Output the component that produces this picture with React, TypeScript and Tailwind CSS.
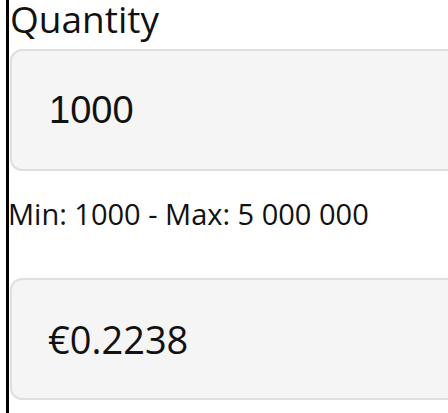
export default function App() {
  const tre = { fontFamily: '"Open Sans", "DejaVu Sans", sans-serif' };
  return (
    <div className="w-[448px] h-[413px] overflow-hidden bg-white pl-[6px]">
      <div className="border-l-[3px] border-black h-full w-[520px] pl-px text-[#111]">
        <div style={tre} className="text-[37px] leading-[35px] h-[38px] pt-px">Quantity</div>
        <div className="mt-[11px] h-[122px] rounded-[12px] border-2 border-[#dcdfe3] bg-[#f5f5f5] flex items-center pl-[37px]">
          <span style={{ fontFamily: '"Liberation Sans", Arial, sans-serif' }} className="text-[38px] leading-none">1000</span>
        </div>
        <div style={tre} className="-ml-[2px] mt-[26px] text-[29px] leading-[34px] h-[34px]">Min: 1000 - Max: 5 000 000</div>
        <div className="mt-[47px] h-[122px] rounded-[12px] border-2 border-[#dcdfe3] bg-[#f5f5f5] flex items-center pl-[36px]">
          <span style={tre} className="text-[38px] leading-none">€0.2238</span>
        </div>
      </div>
    </div>
  );
}
